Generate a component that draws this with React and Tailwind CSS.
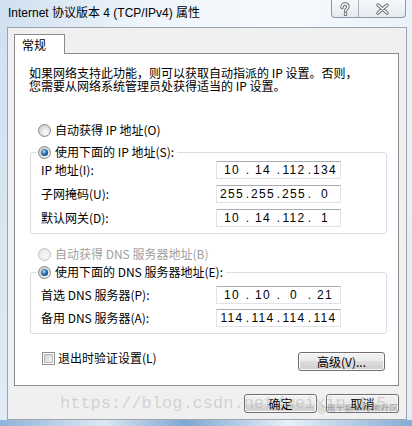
import React from 'react'

const cjk = "font-['SimSun','Noto_Sans_CJK_SC',sans-serif]"

function Radio({ checked, disabled }) {
  const id = checked ? 'rs' : disabled ? 'rd' : 'ru'
  return (
    <svg width="13" height="13" viewBox="0 0 13 13" className="shrink-0">
      <defs>
        <radialGradient id={id + 'bg'} cx="0.6" cy="0.65" r="0.7">
          <stop offset="0" stopColor={disabled ? '#f7f7f7' : '#ffffff'} />
          <stop offset="1" stopColor={disabled ? '#e6e6e6' : '#c9c9c9'} />
        </radialGradient>
        <radialGradient id={id + 'dot'} cx="0.4" cy="0.35" r="0.7">
          <stop offset="0" stopColor="#a9d4f5" />
          <stop offset="0.55" stopColor="#2d77b8" />
          <stop offset="1" stopColor="#123d6b" />
        </radialGradient>
      </defs>
      <circle cx="6.5" cy="6.5" r="6" fill={`url(#${id}bg)`} stroke={disabled ? '#c2c2c2' : '#8a8a8a'} />
      {checked && <circle cx="6.5" cy="6.5" r="3.6" fill={`url(#${id}dot)`} />}
    </svg>
  )
}

function Checkbox() {
  return (
    <svg width="13" height="13" viewBox="0 0 13 13" className="shrink-0">
      <defs>
        <linearGradient id="cbg" x1="0" y1="0" x2="1" y2="1">
          <stop offset="0" stopColor="#cfcfcf" />
          <stop offset="1" stopColor="#f7f7f7" />
        </linearGradient>
      </defs>
      <rect x="0.5" y="0.5" width="12" height="12" fill="#fff" stroke="#8e8f8f" />
      <rect x="2.5" y="2.5" width="8" height="8" fill="url(#cbg)" stroke="#b8b8b8" />
    </svg>
  )
}

function IpField({ parts }) {
  return (
    <div className="w-[125px] h-[18px] flex items-center pl-[3px] bg-white border border-[#dfe3e8] border-t-[#abadb3] font-['Liberation_Sans',sans-serif] text-[12px] text-black">
      {parts.map((p, i) => (
        <React.Fragment key={i}>
          <span className="w-[24px] text-center tracking-[1.3px]">{p}</span>
          {i < 3 && <span className="w-[7px] text-center">.</span>}
        </React.Fragment>
      ))}
    </div>
  )
}

function Row({ label, parts }) {
  return (
    <div className="flex items-center h-[18px]">
      <span className="w-[175px] text-[12px]">{label}</span>
      <IpField parts={parts} />
    </div>
  )
}

function WinButton({ children, className }) {
  return (
    <button className={`h-[19px] rounded-[3px] border border-[#707070] bg-[linear-gradient(#f2f2f2,#ebebeb_50%,#dddddd_50%,#cfcfcf)] shadow-[inset_0_0_0_1px_#fbfbfb] text-[12px] leading-none text-black flex items-center justify-center ${className}`}>
      {children}
    </button>
  )
}

function TitleGlyph({ kind }) {
  const d = kind === 'help'
    ? 'M4 5.5 C4 3 5.5 2 7 2 C8.8 2 10 3.2 10 4.8 C10 6.6 7.5 7 7.5 9 M7.5 11.5 L7.5 12.5'
    : 'M3 3 L12 11 M12 3 L3 11'
  return (
    <svg width="15" height="14" viewBox="0 0 15 14">
      <path d={d} fill="none" stroke="#6f6f6f" strokeWidth="3.4" strokeLinecap="round" />
      <path d={d} fill="none" stroke="#ffffff" strokeWidth="1.4" strokeLinecap="round" />
    </svg>
  )
}

export default function App() {
  return (
    <div className={`relative w-[412px] h-[426px] overflow-hidden bg-[linear-gradient(100deg,#cfe0f0,#eef4fa_30%,#f7fafd_60%,#e3edf7)] ${cjk} text-black`}>
      {/* title bar */}
      <div className="flex items-start h-[27px]">
        <div className="pl-[8px] pt-[5px] font-['Liberation_Sans','Noto_Sans_CJK_SC',sans-serif] text-[12px] leading-[16px] flex-1">
          Internet 协议版本 4 (TCP/IPv4) 属性
        </div>
        <div className="flex mr-[6px] h-[18px] border border-t-0 border-[#8d99a8] rounded-b-[4px] overflow-hidden bg-[linear-gradient(#f6f8fa,#e6ebf1)]">
          <div className="w-[27px] flex items-center justify-center border-r border-[#a8b3c0]">
            <TitleGlyph kind="help" />
          </div>
          <div className="w-[46px] flex items-center justify-center">
            <TitleGlyph kind="close" />
          </div>
        </div>
      </div>

      {/* dialog body */}
      <div className="ml-[7px] w-[400px] h-[393px] border border-[#9da3aa] bg-[#f0f0f0] px-[6px] pt-[6px]">
        <div className="relative z-10 -mb-px w-[51px] h-[20px] bg-white border border-b-0 border-[#898c95] pl-[7px] text-[12px] leading-[19px]">
          常规
        </div>
        <div className="w-[385px] h-[333px] bg-white border border-[#898c95]">
          <p className="ml-[14px] mt-[12px] text-[12px] leading-[13px]">
            如果网络支持此功能，则可以获取自动指派的 IP 设置。否则，
            <br />
            您需要从网络系统管理员处获得适当的 IP 设置。
          </p>

          <div className="ml-[23px] mt-[30px] h-[16px] flex items-center gap-[4px] text-[12px]">
            <Radio />
            <span>自动获得 IP 地址(O)</span>
          </div>

          <fieldset className="ml-[15px] mr-[11px] mt-[6px] border border-[#d5dfe5] rounded-[3px]">
            <legend className="ml-[6px] pl-[1px] pr-[3px] h-[16px] flex items-center gap-[4px] text-[12px]">
              <Radio checked />
              <span>使用下面的 IP 地址(S):</span>
            </legend>
            <div className="flex flex-col gap-[6px] pl-[10px] pt-[1px] pb-[6px]">
              <Row label="IP 地址(I):" parts={['10', '14', '112', '134']} />
              <Row label="子网掩码(U):" parts={['255', '255', '255', '0']} />
              <Row label="默认网关(D):" parts={['10', '14', '112', '1']} />
            </div>
          </fieldset>

          <div className="ml-[23px] mt-[12px] h-[16px] flex items-center gap-[4px] text-[12px] text-[#a0a0a0]">
            <Radio disabled />
            <span>自动获得 DNS 服务器地址(B)</span>
          </div>

          <fieldset className="ml-[15px] mr-[11px] mt-[2px] border border-[#d5dfe5] rounded-[3px]">
            <legend className="ml-[6px] pl-[1px] pr-[3px] h-[16px] flex items-center gap-[4px] text-[12px]">
              <Radio checked />
              <span>使用下面的 DNS 服务器地址(E):</span>
            </legend>
            <div className="flex flex-col gap-[5px] pl-[10px] pt-[6px] pb-[6px]">
              <Row label="首选 DNS 服务器(P):" parts={['10', '10', '0', '21']} />
              <Row label="备用 DNS 服务器(A):" parts={['114', '114', '114', '114']} />
            </div>
          </fieldset>

          <div className="mt-[16px] ml-[27px] mr-[13px] flex items-start justify-between">
            <div className="h-[16px] flex items-center gap-[3px] text-[12px]">
              <Checkbox />
              <span>退出时验证设置(L)</span>
            </div>
            <WinButton className="mt-[2px] w-[87px]">高级(V)...</WinButton>
          </div>
        </div>

        <div className="mt-[8px] flex justify-end gap-[9px] pr-[1px]">
          <WinButton className="w-[73px]">确定</WinButton>
          <WinButton className="w-[73px]">取消</WinButton>
        </div>
      </div>

      {/* bottom frame */}
      <div className="h-[6px] bg-[linear-gradient(90deg,#8fb3d9,#dce8f4_25%,#7ea7d2_45%,#e8f0f8_70%,#86acd5)]" />

      {/* watermark */}
      <div className="absolute left-[60px] top-[394px] font-['Liberation_Mono',monospace] text-[17px] leading-[20px] text-[rgba(150,150,150,0.35)] pointer-events-none">
        https://blog.csdn.net/weixin_445
      </div>
      <div className="absolute left-[318px] top-[404px] text-[9px] leading-[10px] text-[rgba(120,120,120,0.55)] pointer-events-none">
        @稀土掘金技术社区
      </div>
    </div>
  )
}
